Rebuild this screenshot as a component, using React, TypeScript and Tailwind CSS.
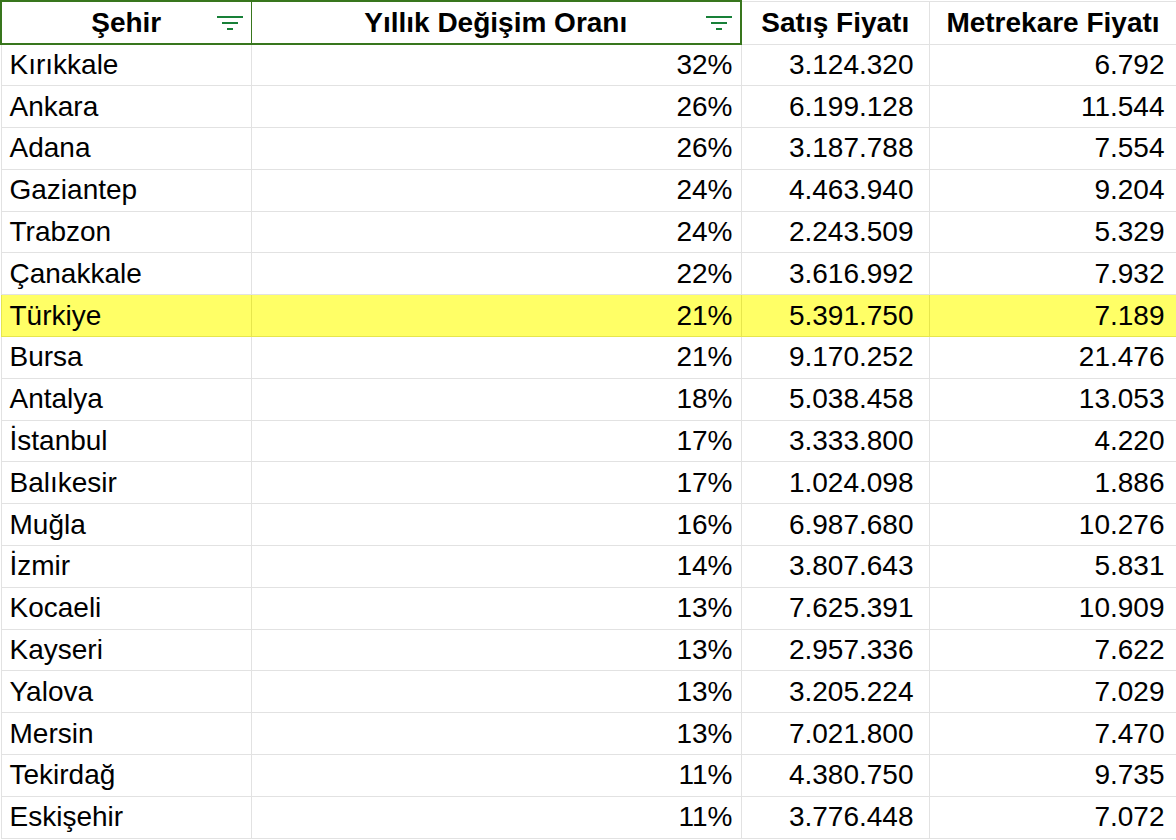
const rows: [string, string, string, string][] = [
  ["Kırıkkale", "32%", "3.124.320", "6.792"],
  ["Ankara", "26%", "6.199.128", "11.544"],
  ["Adana", "26%", "3.187.788", "7.554"],
  ["Gaziantep", "24%", "4.463.940", "9.204"],
  ["Trabzon", "24%", "2.243.509", "5.329"],
  ["Çanakkale", "22%", "3.616.992", "7.932"],
  ["Türkiye", "21%", "5.391.750", "7.189"],
  ["Bursa", "21%", "9.170.252", "21.476"],
  ["Antalya", "18%", "5.038.458", "13.053"],
  ["İstanbul", "17%", "3.333.800", "4.220"],
  ["Balıkesir", "17%", "1.024.098", "1.886"],
  ["Muğla", "16%", "6.987.680", "10.276"],
  ["İzmir", "14%", "3.807.643", "5.831"],
  ["Kocaeli", "13%", "7.625.391", "10.909"],
  ["Kayseri", "13%", "2.957.336", "7.622"],
  ["Yalova", "13%", "3.205.224", "7.029"],
  ["Mersin", "13%", "7.021.800", "7.470"],
  ["Tekirdağ", "11%", "4.380.750", "9.735"],
  ["Eskişehir", "11%", "3.776.448", "7.072"],
]

function Filter() {
  return (
    <svg width="26" height="16" viewBox="0 0 26 16" className="absolute right-[8px] top-[13px]">
      <rect x="0" y="1" width="26" height="2" fill="#188038" />
      <rect x="5" y="7" width="16" height="2" fill="#188038" />
      <rect x="10" y="13" width="6" height="2" fill="#188038" />
    </svg>
  )
}

export default function App() {
  return (
    <div
      className="h-[840px] w-[1176px] overflow-hidden bg-white text-[28px] text-black"
      style={{ fontFamily: '"Liberation Sans", Arial, sans-serif' }}
    >
      <table className="border-collapse table-fixed w-[1176px]">
        <colgroup>
          <col className="w-[250px]" />
          <col className="w-[490px]" />
          <col className="w-[188px]" />
          <col className="w-[248px]" />
        </colgroup>
        <thead>
          <tr className="h-[43px] font-bold leading-none">
            <th className="relative border-2 border-r border-[#38761d] text-center">
              Şehir
              <Filter />
            </th>
            <th className="relative border-2 border-l border-[#38761d] text-center">
              Yıllık Değişim Oranı
              <Filter />
            </th>
            <th className="border border-[#e2e2e2] text-center">Satış Fiyatı</th>
            <th className="border border-[#e2e2e2] text-center">Metrekare Fiyatı</th>
          </tr>
        </thead>
        <tbody>
          {rows.map((r) => {
            const hl = r[0] === "Türkiye"
            const cell = hl
              ? "border border-[#e6e64d] bg-[#ffff66]"
              : "border border-[#e2e2e2]"
            return (
              <tr key={r[0]} className="h-[41.8px] leading-none">
                <td className={`${cell} px-[8px] text-left`}>{r[0]}</td>
                <td className={`${cell} px-[8px] text-right`}>{r[1]}</td>
                <td className={`${cell} px-[15px] text-right`}>{r[2]}</td>
                <td className={`${cell} px-[12px] text-right`}>{r[3]}</td>
              </tr>
            )
          })}
        </tbody>
      </table>
    </div>
  )
}
